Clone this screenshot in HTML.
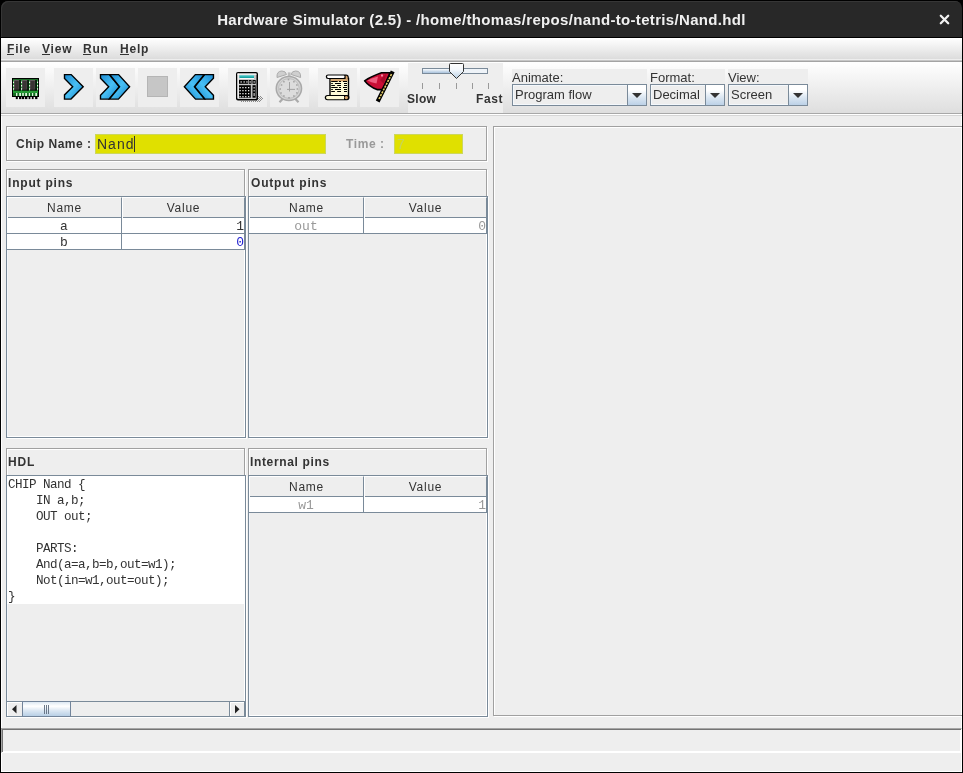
<!DOCTYPE html>
<html><head><meta charset="utf-8">
<style>
*{margin:0;padding:0;box-sizing:border-box}
html,body{width:963px;height:773px;overflow:hidden;background:#000}
body{position:relative;-webkit-font-smoothing:antialiased;font-family:"Liberation Sans",sans-serif;color:#333}
.a{position:absolute;will-change:transform}
#title{left:1px;top:1px;width:961px;height:36px;background:#282828;border-radius:7px 7px 0 0;box-shadow:inset 1px 1px 0 #363636}
#ttext{left:0;top:11px;width:963px;text-align:center;color:#f0f0f0;font-weight:bold;font-size:15px;line-height:18px;letter-spacing:0.33px}
#win{left:1px;top:38px;width:961px;height:734px;background:#eeeeee}
#menubar{left:1px;top:38px;width:961px;height:21px;background:linear-gradient(#ffffff,#dcdcdc)}
#mb2{left:1px;top:59px;width:961px;height:1px;background:#eeeeee}
#mb3{left:1px;top:60px;width:961px;height:1px;background:#c6c6c6}
#menuline{left:1px;top:61px;width:961px;height:1px;background:#a4a4a4}
.mi{top:42px;font-size:12px;font-weight:bold;line-height:15px;color:#333;letter-spacing:0.8px}
.ul{top:54px;height:1px;background:#333}
#toolbar{left:1px;top:62px;width:961px;height:51px;background:linear-gradient(#ffffff,#dedede)}
#tbline{left:1px;top:113px;width:961px;height:1px;background:#a8a8a8}
#tbline2{left:1px;top:114px;width:961px;height:1px;background:#ffffff}
#tbline3{left:1px;top:115px;width:961px;height:1px;background:#d6d6d6}
.btn{top:68px;width:39px;height:39px;background:#eeeeee}
.etch{border:1px solid #a0a0a0;box-shadow:1px 1px 0 #fff, inset 1px 1px 0 #fff}
.lbl{font-size:12px;font-weight:bold;line-height:15px;color:#333}
.plain{font-size:12px;line-height:15px;color:#333}
.combo{height:22px;border:1px solid #7a8a99;background:#eeeeee;box-shadow:inset 1px 1px 0 #f4f8fc,inset -1px -1px 0 #f4f8fc}
.combo .arr{position:absolute;right:0;top:0;width:19px;height:20px;border-left:1px solid #7a8a99;background:linear-gradient(#ffffff,#ffffff 25%,#dde8f3 60%,#bcd1e7)}
.combo .arr:after{content:"";position:absolute;left:4px;top:8px;border-left:5px solid transparent;border-right:5px solid transparent;border-top:5px solid #333}
.combo .txt{position:absolute;left:2px;top:2px;font-size:13px;line-height:15px;color:#333}
.yel{background:#e0e000;border:1px solid #ccd75c}
.sp{border:1px solid #7a8a99;background:#eeeeee;box-shadow:inset 1px 1px 0 #f2f5fa,inset -1px -1px 0 #fff,1px 1px 0 #fff}
.hdr{background:#eeeeee}
.mono{font-family:"Liberation Mono",monospace;font-size:11.67px}
</style></head><body>
<div class="a" id="title"></div>
<div class="a" id="ttext">Hardware Simulator (2.5) - /home/thomas/repos/nand-to-tetris/Nand.hdl</div>
<svg class="a" id="close" style="left:939px;top:14px" width="11" height="11" viewBox="0 0 11 11"><path d="M1.8 1.8L9.2 9.2M9.2 1.8L1.8 9.2" stroke="#f2f2f2" stroke-width="2.3" stroke-linecap="round"/></svg>
<div class="a" id="win"></div>
<div class="a" style="left:1px;top:38px;width:1px;height:734px;background:#fff"></div>
<div class="a" style="left:961px;top:38px;width:1px;height:734px;background:#fff"></div>
<div class="a" style="left:1px;top:771px;width:961px;height:1px;background:#fff"></div>

<div class="a" id="menubar"></div>
<div class="a" id="mb2"></div><div class="a" id="mb3"></div><div class="a" id="menuline"></div>
<div class="a mi" style="left:7px">File</div>
<div class="a mi" style="left:42px">View</div>
<div class="a mi" style="left:83px">Run</div>
<div class="a mi" style="left:120px">Help</div>
<div class="a ul" style="left:7px;width:7px"></div><div class="a ul" style="left:42px;width:8px"></div><div class="a ul" style="left:83px;width:8px"></div><div class="a ul" style="left:120px;width:9px"></div>
<div class="a" id="toolbar"></div>
<div class="a" id="tbline"></div>
<div class="a" id="tbline2"></div><div class="a" id="tbline3"></div>
<!-- buttons -->
<div class="a btn" style="left:6px"></div>
<div class="a btn" style="left:54px"></div>
<div class="a btn" style="left:96px"></div>
<div class="a btn" style="left:138px"></div>
<div class="a btn" style="left:180px"></div>
<div class="a btn" style="left:228px"></div>
<div class="a btn" style="left:270px"></div>
<div class="a btn" style="left:318px"></div>
<div class="a btn" style="left:360px"></div>
<!-- slider panel -->
<div class="a" style="left:408px;top:63px;width:95px;height:50px;background:#eeeeee"></div>
<div class="a lbl" style="left:407px;top:92px;letter-spacing:0.3px">Slow</div>
<div class="a lbl" style="left:476px;top:92px;letter-spacing:0.6px">Fast</div>
<!-- combos -->
<div class="a" style="left:512px;top:69px;width:135px;height:37px;background:#eeeeee"></div>
<div class="a plain" style="left:512px;top:70px;font-size:13px">Animate:</div>
<div class="a combo" style="left:512px;top:84px;width:135px"><div class="txt">Program flow</div><div class="arr"></div></div>
<div class="a" style="left:650px;top:69px;width:75px;height:37px;background:#eeeeee"></div>
<div class="a plain" style="left:650px;top:70px;font-size:13px">Format:</div>
<div class="a combo" style="left:650px;top:84px;width:75px"><div class="txt">Decimal</div><div class="arr"></div></div>
<div class="a" style="left:728px;top:69px;width:80px;height:37px;background:#eeeeee"></div>
<div class="a plain" style="left:728px;top:70px;font-size:13px">View:</div>
<div class="a combo" style="left:728px;top:84px;width:80px"><div class="txt">Screen</div><div class="arr"></div></div>


<!-- icons -->
<svg class="a" style="left:0;top:0" width="963" height="120" viewBox="0 0 963 120">
 <defs>
  <linearGradient id="blu" x1="0" y1="0" x2="1" y2="1">
   <stop offset="0" stop-color="#1b8ad2"/><stop offset="0.5" stop-color="#48c0f5"/><stop offset="1" stop-color="#1580c8"/>
  </linearGradient>
 </defs>
 <!-- chip icon -->
 <g>
  <rect x="12" y="78" width="27" height="19" fill="#000"/>
  <rect x="13" y="79" width="25" height="17" fill="#2a9a3a"/>
  <rect x="13" y="79" width="25" height="1" fill="#1c6e28"/>
  <rect x="13" y="90.5" width="25" height="2.5" fill="#249a34"/>
  <rect x="13" y="93" width="25" height="3" fill="#156b22"/>
  <rect x="14" y="80" width="5.3" height="10" fill="#4a4646"/><rect x="14.8" y="81" width="3.5" height="8" fill="#3a3434"/><rect x="14" y="80" width="5.3" height="1" fill="#5e5a5a"/><rect x="19.3" y="80" width="1.5" height="10.5" fill="#000"/><rect x="14" y="89.6" width="6.8" height="1" fill="#000"/><rect x="22" y="80" width="5.3" height="10" fill="#4a4646"/><rect x="22.8" y="81" width="3.5" height="8" fill="#3a3434"/><rect x="22" y="80" width="5.3" height="1" fill="#5e5a5a"/><rect x="27.3" y="80" width="1.5" height="10.5" fill="#000"/><rect x="22" y="89.6" width="6.8" height="1" fill="#000"/><rect x="30" y="80" width="5.3" height="10" fill="#4a4646"/><rect x="30.8" y="81" width="3.5" height="8" fill="#3a3434"/><rect x="30" y="80" width="5.3" height="1" fill="#5e5a5a"/><rect x="35.3" y="80" width="1.5" height="10.5" fill="#000"/><rect x="30" y="89.6" width="6.8" height="1" fill="#000"/>
  <g fill="#eafbe8"><rect x="13" y="81.6" width="1.1" height="1.5"/><rect x="13" y="85" width="1.1" height="1.5"/><rect x="13" y="88.2" width="1.1" height="1.5"/><rect x="21" y="81.6" width="1.1" height="1.5"/><rect x="21" y="85" width="1.1" height="1.5"/><rect x="21" y="88.2" width="1.1" height="1.5"/><rect x="29" y="81.6" width="1.1" height="1.5"/><rect x="29" y="85" width="1.1" height="1.5"/><rect x="29" y="88.2" width="1.1" height="1.5"/><rect x="37" y="81.6" width="1.1" height="1.5"/><rect x="37" y="85" width="1.1" height="1.5"/><rect x="37" y="88.2" width="1.1" height="1.5"/></g>
  <g fill="#d8f8d8"><rect x="16" y="93" width="1.4" height="3"/><rect x="19.2" y="93" width="1.8" height="3"/><rect x="22.2" y="93" width="1.6" height="3"/><rect x="25.2" y="93" width="1.8" height="3"/><rect x="28.8" y="93" width="1.2" height="3"/><rect x="32" y="93" width="1.2" height="3"/><rect x="35.3" y="93" width="1.7" height="3"/></g>
  <g fill="#000"><rect x="15.8" y="96.5" width="2.0" height="2.6"/><rect x="19.0" y="96.5" width="2.4" height="2.6"/><rect x="22.0" y="96.5" width="2.2" height="2.6"/><rect x="25.0" y="96.5" width="2.4" height="2.6"/><rect x="28.6" y="96.5" width="1.7999999999999998" height="2.6"/><rect x="31.8" y="96.5" width="1.7999999999999998" height="2.6"/><rect x="35.099999999999994" y="96.5" width="2.3" height="2.6"/></g>
 </g>
 <!-- single chevron -->
 <path d="M64.5 74.6H71.2L83.2 86.8L71 99.1H64.5V94.9L72.7 86.8L64.5 78.4Z" fill="url(#blu)" stroke="#000" stroke-width="1.4" stroke-linejoin="miter"/>
 <!-- double chevron -->
 <path d="M100.5 74.6H109.2L119.3 86.8L109 99.1H100.5V95.3L108.7 86.8L100.5 78.2Z" fill="url(#blu)" stroke="#000" stroke-width="1.4"/>
 <path d="M109.8 74.6H118.6L129.6 86.8L118.4 99.1H109.4L119.6 86.8Z" fill="url(#blu)" stroke="#000" stroke-width="1.4"/>
 <!-- stop -->
 <rect x="147.5" y="76.5" width="20" height="20" fill="#c6c6c6" stroke="#b5b5b5"/>
 <!-- rewind (mirror of fast) -->
 <g transform="translate(313.95 0) scale(-1 1)">
 <path d="M100.5 74.6H109.2L119.3 86.8L109 99.1H100.5V95.3L108.7 86.8L100.5 78.2Z" fill="url(#blu)" stroke="#000" stroke-width="1.4"/>
 <path d="M109.8 74.6H118.6L129.6 86.8L118.4 99.1H109.4L119.6 86.8Z" fill="url(#blu)" stroke="#000" stroke-width="1.4"/>
 </g>
 <!-- calculator -->
 <g>
  <g fill="#8a8a8a">
   <rect x="258" y="96" width="1" height="1"/><rect x="260" y="96" width="1" height="1"/><rect x="259" y="97" width="1" height="1"/><rect x="261" y="97" width="1" height="1"/><rect x="258" y="98" width="1" height="1"/><rect x="260" y="98" width="1" height="1"/><rect x="262" y="98" width="1" height="1"/><rect x="257" y="99" width="1" height="1"/><rect x="259" y="99" width="1" height="1"/><rect x="261" y="99" width="1" height="1"/><rect x="256" y="100" width="1" height="1"/><rect x="258" y="100" width="1" height="1"/><rect x="260" y="100" width="1" height="1"/><rect x="241" y="101" width="1" height="1"/><rect x="243" y="101" width="1" height="1"/><rect x="245" y="101" width="1" height="1"/><rect x="247" y="101" width="1" height="1"/><rect x="249" y="101" width="1" height="1"/><rect x="251" y="101" width="1" height="1"/><rect x="253" y="101" width="1" height="1"/><rect x="255" y="101" width="1" height="1"/><rect x="257" y="101" width="1" height="1"/><rect x="259" y="101" width="1" height="1"/>
  </g>
  <rect x="236" y="72" width="22" height="28.5" rx="2" fill="#000"/>
  <rect x="237.5" y="73.5" width="19" height="25.5" rx="1" fill="#c4c4c4"/>
  <rect x="237.5" y="73.5" width="19" height="1.2" fill="#fff"/>
  <rect x="237.5" y="73.5" width="1.2" height="25" fill="#fff"/>
  <rect x="239.5" y="75.5" width="14.5" height="2.6" fill="#1aa3a3"/>
  <rect x="239.5" y="75.5" width="14.5" height="0.8" fill="#6ee6e6"/>
  <rect x="239.5" y="78.1" width="14.5" height="0.9" fill="#fff"/>
  <rect x="239" y="80" width="9" height="3.8" fill="#000"/>
  <rect x="248.7" y="80" width="2.8" height="3.8" fill="#000"/>
  <rect x="252.5" y="80" width="3.2" height="3.8" fill="#000"/>
  <rect x="239" y="85.2" width="11.8" height="12.5" fill="#000"/>
  <rect x="252.5" y="85.2" width="3.2" height="12.5" fill="#000"/>
  <g fill="#e8e8e8">
   <rect x="239.5" y="87" width="1.3" height="1.3"/><rect x="242.3" y="87" width="1.3" height="1.3"/><rect x="245.1" y="87" width="1.3" height="1.3"/><rect x="248" y="87" width="1.3" height="1.3"/>
   <rect x="239.5" y="90" width="1.3" height="1.3"/><rect x="242.3" y="90" width="1.3" height="1.3"/><rect x="245.1" y="90" width="1.3" height="1.3"/><rect x="248" y="90" width="1.3" height="1.3"/>
   <rect x="239.5" y="93" width="1.3" height="1.3"/><rect x="242.3" y="93" width="1.3" height="1.3"/><rect x="245.1" y="93" width="1.3" height="1.3"/><rect x="248" y="93" width="1.3" height="1.3"/>
   <rect x="239.5" y="96" width="1.3" height="1.3"/><rect x="242.3" y="96" width="1.3" height="1.3"/><rect x="245.1" y="96" width="1.3" height="1.3"/><rect x="248" y="96" width="1.3" height="1.3"/>
   <rect x="240.5" y="81.3" width="1.3" height="1.3"/><rect x="243.5" y="81.3" width="1.3" height="1.3"/><rect x="246.3" y="81.3" width="1.3" height="1.3"/><rect x="249.5" y="81.3" width="1.3" height="1.3"/><rect x="253.5" y="81.3" width="1.3" height="1.3"/>
   <rect x="253.6" y="87" width="1" height="1.5"/><rect x="253.6" y="90" width="1" height="1.5"/><rect x="253.6" y="93" width="1" height="3"/>
  </g>
 </g>
 <!-- clock (disabled) -->
 <g>
  <path d="M277 77.5 Q276.5 71 282 71 Q285.8 71 286.5 74.5 Z" fill="#cfcfcf" stroke="#ababab" stroke-width="1"/>
  <path d="M300.6 77.5 Q301.1 71 295.6 71 Q291.8 71 291.1 74.5 Z" fill="#cfcfcf" stroke="#ababab" stroke-width="1"/>
  <rect x="287.8" y="72.4" width="2.8" height="3.6" fill="#bdbdbd"/>
  <path d="M279.5 102.3 L283 98.5 M298.5 102.3 L295 98.5" stroke="#ababab" stroke-width="2.2"/>
  <ellipse cx="288.9" cy="88.5" rx="12.6" ry="12" fill="#d6d6d6" stroke="#a9a9a9" stroke-width="1.6"/>
  <ellipse cx="288.9" cy="88.5" rx="10.4" ry="9.9" fill="#dcdcdc" stroke="#bdbdbd" stroke-width="1"/>
  <g fill="#a6a6a6"><rect x="287.7" y="78.8" width="1.6" height="1.6"/><rect x="293.1" y="80.9" width="1.6" height="1.6"/><rect x="296.1" y="84.2" width="1.6" height="1.6"/><rect x="296.6" y="88.2" width="1.6" height="1.6"/><rect x="296.1" y="92.1" width="1.6" height="1.6"/><rect x="293.1" y="95.2" width="1.6" height="1.6"/><rect x="288.2" y="97.0" width="1.6" height="1.6"/><rect x="283.1" y="95.2" width="1.6" height="1.6"/><rect x="280.2" y="92.2" width="1.6" height="1.6"/><rect x="279.4" y="88.2" width="1.6" height="1.6"/><rect x="280.7" y="84.2" width="1.6" height="1.6"/><rect x="283.1" y="80.9" width="1.6" height="1.6"/></g>
  <path d="M289.5 82V91.5M287 89.4H295" stroke="#a3a3a3" stroke-width="1"/>
 </g>
 <!-- scroll -->
 <g>
  <path d="M330 78.5 H348.5 V96.5 H330 Z" fill="#fdf9d6" stroke="#000" stroke-width="1.4"/>
  <rect x="330.7" y="79.2" width="17.1" height="2.2" fill="#d5a36c"/>
  <path d="M328 74.5 H346 Q348.8 74.5 348.8 77.5 V79 H328 Q325.8 79 325.8 76.8 Q325.8 74.5 328 74.5Z" fill="#000"/>
  <path d="M328.2 75.6 H343.5 Q344.6 75.6 344.6 76.8 Q344.6 77.9 343.5 77.9 H328.2 Q327 77.9 327 76.8 Q327 75.6 328.2 75.6Z" fill="#fff"/>
  <path d="M345.6 75.6 Q347.7 75.6 347.7 77.5 V79.5 H345.6Z" fill="#d5a36c"/>
  <path d="M327.5 95 H347 Q349.5 95 349.5 97.5 Q349.5 100.3 347 100.3 H327.5 Q324.8 100.3 324.8 97.6 Q324.8 95 327.5 95Z" fill="#000"/>
  <path d="M327.6 96.1 H344 V99.2 H327.6 Q326 99.2 326 97.6 Q326 96.1 327.6 96.1Z" fill="#fdf9d6"/>
  <circle cx="346.3" cy="97.6" r="1.7" fill="#d5a36c"/>
  <g fill="#000">
   <rect x="331.2" y="81" width="6.5" height="1"/><rect x="339" y="81" width="2" height="1"/><rect x="343" y="81" width="4" height="1"/>
   <rect x="331.2" y="83" width="1.6" height="1"/><rect x="335" y="83" width="6" height="1"/><rect x="344" y="83" width="3" height="1"/>
   <rect x="331.2" y="85" width="3.7" height="1"/><rect x="337.2" y="85" width="3.8" height="1"/><rect x="344" y="85" width="3" height="1"/>
   <rect x="331.2" y="87" width="6.5" height="1"/><rect x="339" y="87" width="2" height="1"/><rect x="343" y="87" width="4" height="1"/>
   <rect x="331.2" y="89" width="1.6" height="1"/><rect x="335" y="89" width="6" height="1"/><rect x="344" y="89" width="3" height="1"/>
   <rect x="331.2" y="91" width="3.7" height="1"/><rect x="337.2" y="91" width="3.8" height="1"/><rect x="344" y="91" width="3" height="1"/>
  </g>
 </g>
 <!-- flag -->
 <g>
  <path d="M364.6 80.8 Q371 76.5 381.5 72.8 H390 L383 89.6 H377 Q369 86.5 364.6 80.8Z" fill="#c90f35" stroke="#000" stroke-width="1.6" stroke-linejoin="round"/>
  <path d="M367.5 80.6 Q372 78 378 76.5 L376.5 83.5 Q371 82.5 367.5 80.6Z" fill="#ee5d7e"/><path d="M380 80 L386 74 L384 84 Z" fill="#a80a2a"/>
  <rect x="381" y="74.5" width="2" height="2" fill="#f48aa3"/>
  <path d="M391.8 73.2 L378.6 99.6" stroke="#000" stroke-width="4.2" stroke-linecap="square"/>
  <path d="M391.5 74.2 L379 99" stroke="#e6cf6a" stroke-width="1.6" stroke-dasharray="2.2 1"/>
 </g>
 <!-- slider -->
 <rect x="422.5" y="68.5" width="65" height="5" fill="#eef3f8" stroke="#7a8a99"/>
 <rect x="423" y="69" width="28" height="4" fill="url(#trk)"/>
 <defs><linearGradient id="trk" x1="0" y1="0" x2="0" y2="1"><stop offset="0" stop-color="#fafcfe"/><stop offset="1" stop-color="#a9c2dc"/></linearGradient>
 <linearGradient id="thm" x1="0" y1="0" x2="0" y2="1"><stop offset="0" stop-color="#fff"/><stop offset="0.4" stop-color="#f4f8fc"/><stop offset="1" stop-color="#b9cfe4"/></linearGradient></defs>
 <path d="M449.5 64.5 Q449.5 63.5 450.5 63.5 H462.5 Q463.5 63.5 463.5 64.5 V71.5 L456.5 78.5 L449.5 71.5Z" fill="url(#thm)" stroke="#333" stroke-width="1"/>
 <g stroke="#999" stroke-width="1"><path d="M422.5 83V89M439.5 83V89M456.5 83V89M472.5 83V89M488.5 83V89"/></g>
</svg>

<!-- chip name box -->
<div class="a etch" style="left:6px;top:126px;width:481px;height:35px"></div>
<div class="a lbl" style="left:16px;top:137px;letter-spacing:0.5px">Chip Name :</div>
<div class="a yel" style="left:95px;top:134px;width:231px;height:20px"></div>
<div class="a" style="left:97px;top:136px;font-size:14px;line-height:17px;color:#333;letter-spacing:1px">Nand</div>
<div class="a" style="left:134px;top:136px;width:1px;height:16px;background:#333"></div>
<div class="a lbl" style="left:346px;top:137px;color:#999;letter-spacing:0.6px">Time :</div>
<div class="a yel" style="left:394px;top:134px;width:69px;height:20px"></div>
<div class="a" style="left:397px;top:136px;font-size:14px;line-height:17px;color:#c6d45e">7</div>

<!-- screen panel -->
<div class="a etch" style="left:493px;top:126px;width:470px;height:590px"></div>

<!-- input pins -->
<div class="a etch" style="left:6px;top:169px;width:239px;height:268px"></div>
<div class="a lbl" style="left:8px;top:176px;letter-spacing:0.8px">Input pins</div>
<div class="a sp" style="left:6px;top:196px;width:240px;height:242px"></div>

<!-- output pins -->
<div class="a etch" style="left:248px;top:169px;width:239px;height:268px"></div>
<div class="a lbl" style="left:251px;top:176px;letter-spacing:0.8px">Output pins</div>
<div class="a sp" style="left:248px;top:196px;width:240px;height:242px"></div>

<!-- HDL -->
<div class="a etch" style="left:6px;top:448px;width:239px;height:268px"></div>
<div class="a lbl" style="left:8px;top:455px;letter-spacing:0.8px">HDL</div>
<div class="a sp" style="left:6px;top:475px;width:240px;height:242px"></div>

<!-- internal pins -->
<div class="a etch" style="left:248px;top:448px;width:239px;height:268px"></div>
<div class="a lbl" style="left:250px;top:455px;letter-spacing:0.65px">Internal pins</div>
<div class="a sp" style="left:248px;top:475px;width:240px;height:242px"></div>


<!-- table generic styles -->
<style>
.th{position:absolute;height:21px;background:#eeeeee;border-top:1px solid #fff;border-left:1px solid #fff;border-right:1px solid #7a8a99;font-size:12px;line-height:15px;color:#333;text-align:center;letter-spacing:0.75px}
.thb{position:absolute;height:1px;background:#7a8a99}
.row{position:absolute;background:#fff}
.gl{position:absolute;background:#7a8a99}
.cell{position:absolute;will-change:transform;font-family:"Liberation Mono",monospace;font-size:13px;line-height:16px;color:#333;padding-top:1px}
.hdl{position:absolute;will-change:transform;font-family:"Liberation Mono",monospace;font-size:12.6px;line-height:16px;color:#333;letter-spacing:-0.56px}
.th,.row,.gl,.thb{will-change:transform}
</style>
<!-- input pins table -->
<div class="th" style="left:7px;top:197px;width:115px;padding-top:3px">Name</div>
<div class="th" style="left:122px;top:197px;width:123px;padding-top:3px">Value</div>
<div class="thb" style="left:8px;top:217px;width:114px"></div>
<div class="thb" style="left:123px;top:217px;width:122px"></div>
<div class="row" style="left:7px;top:218px;width:238px;height:31px"></div>
<div class="gl" style="left:7px;top:233px;width:238px;height:1px"></div>
<div class="gl" style="left:7px;top:249px;width:238px;height:1px"></div>
<div class="gl" style="left:121px;top:218px;width:1px;height:32px"></div>
<div class="gl" style="left:244px;top:218px;width:1px;height:32px"></div>
<div class="cell" style="left:7px;top:218px;width:114px;text-align:center">a</div>
<div class="cell" style="left:7px;top:234px;width:114px;text-align:center">b</div>
<div class="cell" style="left:122px;top:218px;width:122px;text-align:right">1</div>
<div class="cell" style="left:122px;top:234px;width:122px;text-align:right;color:#2323d0">0</div>

<!-- output pins table -->
<div class="th" style="left:249px;top:197px;width:115px;padding-top:3px">Name</div>
<div class="th" style="left:364px;top:197px;width:123px;padding-top:3px">Value</div>
<div class="thb" style="left:250px;top:217px;width:114px"></div>
<div class="thb" style="left:365px;top:217px;width:122px"></div>
<div class="row" style="left:249px;top:218px;width:238px;height:15px"></div>
<div class="gl" style="left:249px;top:233px;width:238px;height:1px"></div>
<div class="gl" style="left:363px;top:218px;width:1px;height:16px"></div>
<div class="gl" style="left:486px;top:218px;width:1px;height:16px"></div>
<div class="cell" style="left:249px;top:218px;width:114px;text-align:center;color:#999">out</div>
<div class="cell" style="left:364px;top:218px;width:122px;text-align:right;color:#999">0</div>

<!-- internal pins table -->
<div class="th" style="left:249px;top:476px;width:115px;padding-top:3px">Name</div>
<div class="th" style="left:364px;top:476px;width:123px;padding-top:3px">Value</div>
<div class="thb" style="left:250px;top:496px;width:114px"></div>
<div class="thb" style="left:365px;top:496px;width:122px"></div>
<div class="row" style="left:249px;top:497px;width:238px;height:15px"></div>
<div class="gl" style="left:249px;top:512px;width:238px;height:1px"></div>
<div class="gl" style="left:363px;top:497px;width:1px;height:16px"></div>
<div class="gl" style="left:486px;top:497px;width:1px;height:16px"></div>
<div class="cell" style="left:249px;top:497px;width:114px;text-align:center;color:#999">w1</div>
<div class="cell" style="left:364px;top:497px;width:122px;text-align:right;color:#999">1</div>

<!-- HDL text -->
<div class="row" style="left:7px;top:476px;width:238px;height:128px"></div>
<pre class="hdl" style="left:8px;top:477px;margin:0">CHIP Nand {
    IN a,b;
    OUT out;

    PARTS:
    And(a=a,b=b,out=w1);
    Not(in=w1,out=out);
}</pre>
<!-- HDL scrollbar -->
<div class="a" style="left:7px;top:701px;width:238px;height:16px;background:#eeeeee;border-top:1px solid #7a8a99;border-bottom:1px solid #7a8a99"></div>
<div class="a" style="left:7px;top:702px;width:15px;height:14px;background:#eeeeee;border-top:1px solid #fff;border-left:1px solid #fff"></div>
<svg class="a" style="left:12px;top:705px" width="5" height="9"><path d="M4.5 0V8.5L0 4.25Z" fill="#222"/></svg>
<div class="a" style="left:22px;top:701px;width:49px;height:16px;border:1px solid #72849a;background:linear-gradient(#dde8f3,#ffffff 30%,#dde8f3 60%,#b8cfe5)"></div>
<div class="a" style="left:44px;top:705px;width:1px;height:9px;background:#6a7889;box-shadow:2px 0 0 #6a7889,4px 0 0 #6a7889"></div>
<div class="a" style="left:229px;top:702px;width:1px;height:14px;background:#7a8a99"></div>
<div class="a" style="left:230px;top:702px;width:14px;height:14px;background:#eeeeee;border-top:1px solid #fff;border-left:1px solid #fff"></div>
<div class="a" style="left:244px;top:702px;width:1px;height:14px;background:#7a8a99"></div>
<svg class="a" style="left:235px;top:705px" width="5" height="9"><path d="M0 0V8.5L4.5 4.25Z" fill="#222"/></svg>

<!-- status bar -->
<div class="a" style="left:1px;top:728px;width:961px;height:25px;background:#eeeeee;border-top:1px solid #a6a6a6;border-left:1px solid #a6a6a6;border-bottom:1px solid #fff;border-right:1px solid #fff;box-shadow:inset 1px 1px 0 #747474,inset -1px -1px 0 #fff"></div>
<div class="a" style="left:962px;top:37px;width:1px;height:736px;background:#000"></div>
<div class="a" style="left:0;top:772px;width:963px;height:1px;background:#000"></div>
<div class="a" style="left:0;top:37px;width:1px;height:736px;background:#000"></div>
</body></html>
